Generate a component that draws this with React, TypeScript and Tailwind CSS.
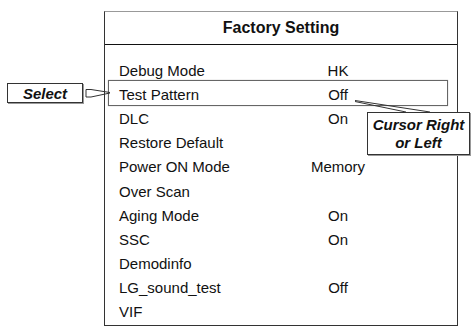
const rows: { label: string; value?: string; selected?: boolean }[] = [
  { label: "Debug Mode", value: "HK" },
  { label: "Test Pattern", value: "Off", selected: true },
  { label: "DLC", value: "On" },
  { label: "Restore Default" },
  { label: "Power ON Mode", value: "Memory" },
  { label: "Over Scan" },
  { label: "Aging Mode", value: "On" },
  { label: "SSC", value: "On" },
  { label: "Demodinfo" },
  { label: "LG_sound_test", value: "Off" },
  { label: "VIF" },
];

function MenuRow({ label, value, selected }: { label: string; value?: string; selected?: boolean }) {
  return (
    <div className="relative flex h-[24.2px] items-center pl-[14px]">
      {selected && (
        <div className="absolute -top-[2px] bottom-0 left-[3px] right-[9px] border border-[#666] shadow-[0_0_1px_#aaa]" />
      )}
      <span className="w-[179px] shrink-0">{label}</span>
      <span className="w-[80px] text-center">{value}</span>
    </div>
  );
}

export default function App() {
  return (
    <div className="relative h-[329px] w-[472px] overflow-hidden bg-white font-['Liberation_Sans',Arial,sans-serif] text-[15px] leading-none text-[#111]">
      <div className="ml-[104px] mt-[11px] flex h-[315px] w-[354px] flex-col border border-[#333] border-t-[#999]">
        <div className="flex h-[33px] items-center justify-center border-b border-[#111] pb-[1px] text-[16px] font-bold">
          Factory Setting
        </div>
        <div className="flex flex-col pt-[13px]">
          {rows.map((r) => (
            <MenuRow key={r.label} {...r} />
          ))}
        </div>
      </div>

      <svg
        className="pointer-events-none absolute left-0 top-0"
        width="472"
        height="329"
        viewBox="0 0 472 329"
        fill="none"
        stroke="#333"
        strokeWidth="1"
      >
        <polyline points="86,97 86,89.5 91,89.5 110,92.5" />
        <polyline points="86,97 91,97 110,93" />
        <polyline points="355,100.5 430,112" />
        <polyline points="355,101.5 406,112" />
      </svg>

      <div className="absolute left-[7px] top-[83px] flex h-[20px] w-[76px] items-center justify-center border border-[#333] bg-white text-[15px] font-bold italic shadow-[1px_1px_0_#999]">
        Select
      </div>

      <div className="absolute left-[367px] top-[112px] flex h-[43px] w-[103px] flex-col items-center justify-center border border-[#333] bg-white text-[15px] font-bold italic leading-[18px] shadow-[1px_1px_0_#999]">
        <span>Cursor Right</span>
        <span>or Left</span>
      </div>
    </div>
  );
}
